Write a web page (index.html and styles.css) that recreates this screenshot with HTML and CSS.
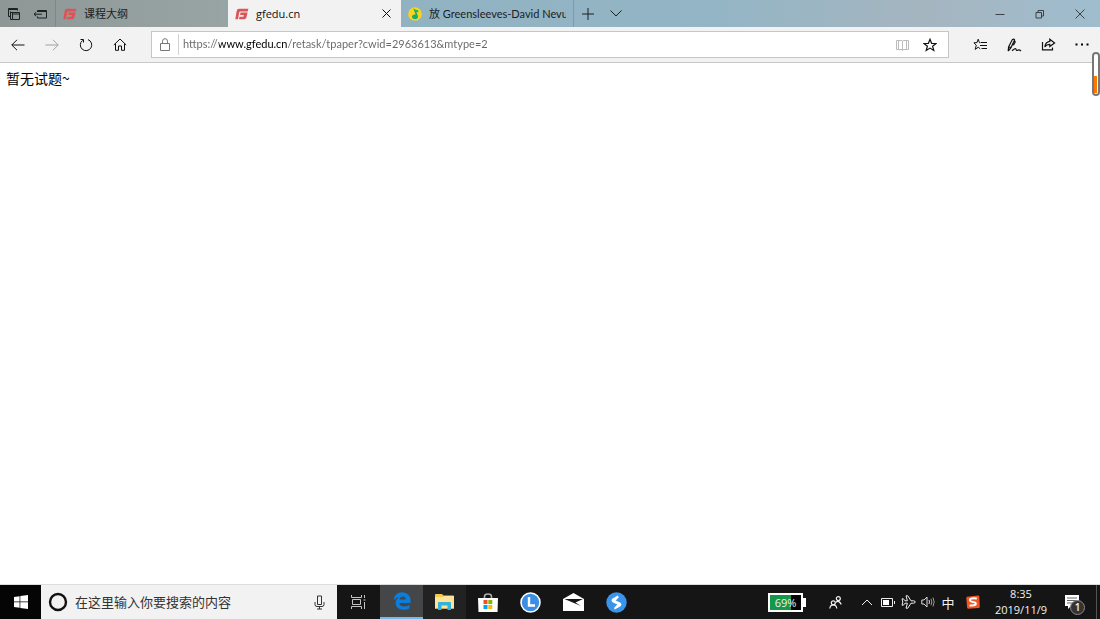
FILE: index.html
```
<!DOCTYPE html>
<html lang="zh-CN">
<head>
    <meta charset="UTF-8">
    <meta name="viewport" content="width=device-width, initial-scale=1.0">
    <title>gfedu.cn</title>
    <link rel="stylesheet" href="styles.css">
</head>
<body>
    <svg class="defs" aria-hidden="true">
        <symbol id="logo-g" viewBox="0 0 14 12">
            <path d="M4 .8H13.4L12.7 3.4H5.4Q4.5 3.4 4.3 4.3L3 11.2H.3L1.6 3.2Q2.1 .8 4 .8Z" fill="#dd5458"/>
            <path d="M5.6 4.6H12.6L11.4 9.4Q11 11.2 9.2 11.2H4L4.5 8.8H8.4L8.8 7H5Z" fill="#dd5458"/>
        </symbol>
    </svg>

    <!-- tabs -->
    <header class="tabbar">
        <div class="tab-tools">
            <button class="tool" aria-label="标签页">
                <svg class="icon" width="14" height="14" viewBox="0 0 14 14"><path d="M3.5 9.5H1.5V1.5H10.5V3.5M1.5 2.5H10M5.5 12.5H3.5V4.5M4 5.5H12.5V12.5H5.5V5.5M5.5 7H12.5"/></svg>
            </button>
            <button class="tool" aria-label="搁置标签页">
                <svg class="icon" width="15" height="12" viewBox="0 0 15 12"><path d="M4.5 4V2.5H13.5V10H4.5V8.5M4.5 3.5H13.5M1 6.2H9M3.2 4.2L1 6.2L3.2 8.2"/></svg>
            </button>
        </div>
        <a class="tab tab-first" href="#">
            <svg width="14" height="12"><use href="#logo-g"/></svg>
            <span class="tab-title">课程大纲</span>
        </a>
        <div class="tab active">
            <svg width="14" height="12"><use href="#logo-g"/></svg>
            <span class="tab-title">gfedu.cn</span>
            <button class="close" aria-label="关闭标签页">
                <svg class="icon" width="9" height="9" viewBox="0 0 9 9"><path d="M.5 .5L8.5 8.5M8.5 .5L.5 8.5"/></svg>
            </button>
        </div>
        <a class="tab tab-music" href="#">
            <svg width="14" height="14" viewBox="0 0 14 14"><circle cx="7" cy="7" r="6.8" fill="#f8d51c"/><path d="M5.2 1.2Q7.2 3 10.4 3.4L10.2 5.2L8.4 4.8L9.8 8.6Q10.8 11.8 7.4 12.2Q4 12.2 4 9.6Q4.4 7.2 7.6 7.6L6.2 3.8Z" fill="#16ac72"/></svg>
            <span class="tab-title">放 Greensleeves-David Nevu</span>
        </a>
        <button class="new-tab" aria-label="新建标签页">
            <svg class="icon" width="12" height="12" viewBox="0 0 12 12"><path d="M6 0V12M0 6H12"/></svg>
        </button>
        <button class="new-tab" aria-label="标签页预览">
            <svg class="icon" width="12" height="7" viewBox="0 0 12 7"><path d="M.5 .5L6 6L11.5 .5"/></svg>
        </button>
        <div class="window-buttons">
            <button aria-label="最小化"><svg class="icon" width="10" height="10" viewBox="0 0 10 10"><path d="M.5 5.5H9.5"/></svg></button>
            <button aria-label="还原"><svg class="icon" width="10" height="10" viewBox="0 0 10 10"><path d="M1 3.5H6.5V9H1ZM3 3.5V1.5H8.5V7H6.5"/></svg></button>
            <button aria-label="关闭"><svg class="icon" width="10" height="10" viewBox="0 0 10 10"><path d="M.5 .5L9.5 9.5M9.5 .5L.5 9.5"/></svg></button>
        </div>
    </header>

    <!-- address bar -->
    <nav class="toolbar">
        <button aria-label="后退"><svg class="icon" width="14" height="12" viewBox="0 0 14 12"><path d="M.8 6H13.5M6 .8L.8 6L6 11.2"/></svg></button>
        <button class="disabled" aria-label="前进" disabled><svg class="icon" width="14" height="12" viewBox="0 0 14 12"><path d="M.5 6H13.2M8 .8L13.2 6L8 11.2"/></svg></button>
        <button aria-label="刷新"><svg class="icon" width="14" height="14" viewBox="0 0 14 14"><path d="M9 1.6A5.7 5.7 0 1 1 3.6 2.4M1.5 1.5H4.5V4.5"/></svg></button>
        <button aria-label="主页"><svg class="icon" width="14" height="13" viewBox="0 0 14 13"><path d="M.8 7L7 1L13.2 7M2.5 5.6V12.3H5.5V8H8.5V12.3H11.5V5.6"/></svg></button>
        <div class="address">
            <svg class="icon lock" width="10" height="13" viewBox="0 0 10 13"><path d="M.5 5.5H9.5V12.5H.5ZM2.5 5.5V3.2A2.5 2.5 0 0 1 7.5 3.2V5.5"/></svg>
            <input class="url" type="text" aria-label="地址" value="https://www.gfedu.cn/retask/tpaper?cwid=2963613&amp;mtype=2" spellcheck="false">
            <button class="reading" aria-label="阅读视图"><svg class="icon" width="13" height="12" viewBox="0 0 13 12"><path d="M.5 1.5H5Q6.5 1.5 6.5 2.5Q6.5 1.5 8 1.5H12.5V10.5H8Q6.5 10.5 6.5 11.5Q6.5 10.5 5 10.5H.5ZM6.5 2.5V11M2.5 1.5V10.5M10.5 1.5V10.5"/></svg></button>
            <button aria-label="收藏"><svg class="icon" width="14" height="14" viewBox="0 0 14 14"><path d="M7 1.3L8.6 5.3L13 5.5L9.6 8.2L10.8 12.5L7 10.1L3.2 12.5L4.4 8.2L1 5.5L5.4 5.3Z" stroke-width="1.2"/></svg></button>
        </div>
        <button aria-label="收藏夹"><svg class="icon" width="14" height="13" viewBox="0 0 14 13"><path d="M7.5 4.7L6.4 4.6L5.2 1.2L4 4.6L.9 4.8L3.3 7.2L2.2 11.4L5.2 9.2L7.2 10.8M8 4.5H14M7 7.5H14M8.5 10.5H14"/></svg></button>
        <button aria-label="添加笔记"><svg class="icon" width="15" height="14" viewBox="0 0 15 14"><path d="M1.2 13L1.6 9L5.2 1.8Q7.4 .2 7.6 2L4 9.6L1.2 13M1.6 9L4 9.6M7.4 2.6L8.2 4L6.4 7.2M5 12.8Q8.6 9.6 9 11.2Q9.2 13.2 11.2 12Q12.5 11.6 14 13" stroke-width="1.2"/></svg></button>
        <button aria-label="共享"><svg class="icon" width="15" height="13" viewBox="0 0 15 13"><path d="M1.5 4V11.8H11.5V9.5M8.8 1.2L13.6 4.9L8.8 8.6V6.4Q5.8 6.2 3.8 9Q4.4 4 8.8 3.4Z" stroke-width="1.2"/></svg></button>
        <button aria-label="设置及其他"><svg width="14" height="3" viewBox="0 0 14 3"><path d="M.5 .5H2.5V2.5H.5ZM6 .5H8V2.5H6ZM11.5 .5H13.5V2.5H11.5Z"/></svg></button>
    </nav>

    <main class="page">
        <p>暂无试题~</p>
    </main>

    <!-- floating meter on the window edge -->
    <div class="meter"><div class="meter-fill"></div></div>

    <!-- taskbar -->
    <footer class="taskbar">
        <button class="start" aria-label="开始"><svg width="14" height="14" viewBox="0 0 14 14" fill="#fff"><path d="M0 2L5.6 1.2V6.6H0ZM6.3 1.1L14 0V6.6H6.3ZM0 7.3H5.6V12.7L0 12ZM6.3 7.3H14V14L6.3 12.9Z"/></svg></button>
        <div class="search">
            <svg width="20" height="20" viewBox="0 0 20 20"><circle cx="10" cy="10" r="8" fill="none" stroke="#111" stroke-width="2.4"/></svg>
            <input type="text" aria-label="搜索" placeholder="在这里输入你要搜索的内容">
            <button aria-label="语音"><svg class="icon" width="11" height="15" viewBox="0 0 11 15"><path d="M3.5 1H7.5V9.5H3.5ZM1 7V9.5Q1 11.5 3 11.5H8Q10 11.5 10 9.5V7M5.5 11.5V14M3 14H8"/></svg></button>
        </div>
        <button class="app" aria-label="任务视图"><svg width="15" height="14" viewBox="0 0 15 14" fill="none" stroke="#c4c4c4"><path d="M.5 0V2.5H10.5V0M.5 14V11.5H10.5V14M1.5 4.5H9.5V9.5H1.5ZM13.5 0V3M13.5 7V14M12.5 5H14.5"/></svg></button>
        <button class="app current" aria-label="Microsoft Edge"><svg width="18" height="18" viewBox="0 0 18 18"><path d="M.6 8.4Q1.4 .4 9.3 .3Q17.6 .6 17.6 9.6V11H6.3Q6.8 14.4 11 14.5Q14 14.5 16.5 13V16.5Q13.8 17.9 10.5 17.8Q3 17.5 2.6 11Q2.5 7.2 6.4 5Q3 5.4 .6 8.4ZM6.5 7.6H12.8Q12.6 4.5 9.8 4.4Q7 4.6 6.5 7.6Z" fill="#0b7ddd"/></svg></button>
        <button class="app opened" aria-label="文件资源管理器"><svg width="19" height="16" viewBox="0 0 19 16"><path d="M0 1Q0 0 1 0H7L8.5 1.5H18Q19 1.5 19 2.5V14.5H0Z" fill="#f7c94c"/><path d="M1 3L8 3L9 2H19V14.5H0V3Z" fill="#ffe498"/><path d="M3 9Q3 8 4 8H15Q16 8 16 9V16H12.5V11.5H6.5V16H3Z" fill="#32b2df"/></svg></button>
        <button class="app" aria-label="Microsoft Store"><svg width="20" height="19" viewBox="0 0 20 19"><path d="M6.5 5V3.5Q6.5 1 10 1Q13.5 1 13.5 3.5V5" fill="none" stroke="#aaa" stroke-width="1.6"/><path d="M0 5H20L19.5 19H.5Z" fill="#fff"/><path d="M5.5 7H9.5V11H5.5Z" fill="#f25022"/><path d="M10.3 7H14.3V11H10.3Z" fill="#7fba00"/><path d="M5.5 12H9.5V16H5.5Z" fill="#00a4ef"/><path d="M10.3 12H14.3V16H10.3Z" fill="#ffb900"/></svg></button>
        <button class="app" aria-label="时钟"><svg width="21" height="21" viewBox="0 0 21 21"><circle cx="10.5" cy="10.5" r="9.5" fill="#3b8ee4" stroke="#fff" stroke-width="1.6"/><path d="M9 5V13.5H15" fill="none" stroke="#fff" stroke-width="2.4"/></svg></button>
        <button class="app" aria-label="邮件"><svg width="21" height="18" viewBox="0 0 21 18"><path d="M0 6L10.5 0L21 6V18H0Z" fill="#fff"/><path d="M1.5 6H20L12.5 9.5L18 13Z" fill="#161515"/></svg></button>
        <button class="app" aria-label="浏览器"><svg width="21" height="21" viewBox="0 0 21 21"><circle cx="10.5" cy="10.5" r="10.2" fill="#3994ec"/><path d="M12.2 4.2L7.2 7.2Q5.6 8.6 7.4 9.8L12.8 12.2L8.6 16.6M8.4 16.8L13.6 13.8Q15.4 12.4 13.6 11.2L8.2 8.8L12.4 4.4" fill="none" stroke="#fff" stroke-width="1.8"/></svg></button>

        <div class="tray">
            <div class="battery"><div class="battery-body"><div class="battery-fill" style="width: 69%"></div><span>69%</span></div></div>
            <button class="people" aria-label="人脉"><svg width="13" height="13" viewBox="0 0 13 13" fill="none" stroke="#f2f2f2" stroke-width="1.2"><circle cx="9.3" cy="2.6" r="2"/><path d="M7 6.4Q9.3 3.4 12.3 8.4"/><circle cx="4.3" cy="6.8" r="2"/><path d="M.8 12.5Q1.2 8.8 4.3 8.8Q7.4 8.8 7.8 12.5" /></svg></button>
            <button class="tray-up" aria-label="显示隐藏的图标"><svg width="12" height="7" viewBox="0 0 12 7" fill="none" stroke="#eee"><path d="M1 6L6 1L11 6"/></svg></button>
            <button aria-label="电源"><svg width="14" height="9" viewBox="0 0 14 9" fill="none" stroke="#eee"><path d="M.5 .5H11.5V8.5H.5ZM13.5 3V6"/><path d="M2 2H8V7H2Z" fill="#fff" stroke="none"/></svg></button>
            <button aria-label="飞行模式"><svg width="15" height="14" viewBox="0 0 15 14" fill="none" stroke="#eee"><path d="M1 3.8H2.4L4 5.8H6.4L5 .8H6.8L10 5.8H12.5Q14.2 5.8 14.2 7Q14.2 8.2 12.5 8.2H10L6.8 13.2H5L6.4 8.2H4L2.4 10.2H1L1.8 7Z"/></svg></button>
            <button aria-label="音量"><svg width="14" height="12" viewBox="0 0 14 12" fill="none" stroke="#ddd"><path d="M.8 4H3L6 1V11L3 8H.8ZM8 4Q9 6 8 8"/><path d="M10 2.8Q11.7 6 10 9.2M12 1.5Q14.3 6 12 10.5" stroke="#999"/></svg></button>
            <button class="ime" aria-label="输入法">中</button>
            <button class="sogou" aria-label="搜狗输入法"><svg width="14" height="14" viewBox="0 0 14 14"><path d="M1.2 1.8L12 .4Q13.2 .3 13.3 1.5L13.8 11.8Q13.8 13 12.6 13.1L2.4 13.8Q1.2 13.8 1.1 12.6L.3 3Q.2 2 1.2 1.8Z" fill="#f05523"/><path d="M10.8 3.5Q4 2.8 3.9 5Q4 6.5 7 7Q10 7.4 9.8 9Q9.4 10.8 3.5 10.4" fill="none" stroke="#fff" stroke-width="2"/></svg></button>
            <button class="clock"><span>8:35</span><span>2019/11/9</span></button>
            <button class="notice" aria-label="通知">
                <svg width="14" height="14" viewBox="0 0 14 14"><path d="M0 0H14V11H6L3 14V11H0Z" fill="#fff"/><path d="M2 3H12M2 5.5H12M2 8H8" stroke="#666"/></svg>
                <span class="badge">1</span>
            </button>
            <button class="desktop" aria-label="显示桌面"></button>
        </div>
    </footer>
</body>
</html>
```
FILE: styles.css
```
*, *::before, *::after {
    margin: 0;
    padding: 0;
    box-sizing: border-box;
}

body {
    min-height: 100vh;
    display: flex;
    flex-direction: column;
    position: relative;
    background-color: #fff;
    color: #000;
    font-family: "Open Sans", "Noto Sans CJK SC", sans-serif;
    font-size: 11px;
}

button, input {
    border: none;
    background: none;
    color: inherit;
    font: inherit;
}

button {
    display: flex;
    align-items: center;
    justify-content: center;
    flex-shrink: 0;
}

svg {
    display: block;
    flex-shrink: 0;
}

.defs {
    position: absolute;
    width: 0;
    height: 0;
}

.icon {
    fill: none;
    stroke: currentColor;
}

/* tabs */
.tabbar {
    height: 27px;
    display: flex;
    background: linear-gradient(90deg, #8e9796 0, #98a4a4 20%, #91b2c1 37%, #94b5c5 65%, #a5b5c0 84%, #9fbdce 100%);
    color: #1c2124;
}

.tab-tools {
    width: 55px;
    display: flex;
}

.tool {
    width: 27px;
}

.tab {
    width: 173px;
    display: flex;
    align-items: center;
    gap: 7px;
    padding: 0 7px;
    color: inherit;
    line-height: 16px;
    text-decoration: none;
}

.tab-first {
    border-left: 1px solid #7f8989;
}

.tab.active {
    background-color: #f2f2f2;
    color: #111;
}

.tab-music {
    border-right: 1px solid #7c9cac;
    font-family: Lato, "Noto Sans CJK SC", sans-serif;
}

.tab-title {
    flex: 1;
    overflow: hidden;
    white-space: nowrap;
}

.close {
    width: 16px;
    height: 16px;
}

.new-tab {
    width: 28px;
}

.window-buttons {
    display: flex;
    margin-left: auto;
    color: #3a4247;
}

.window-buttons button {
    width: 40px;
}

/* address bar */
.toolbar {
    height: 36px;
    display: flex;
    align-items: center;
    padding: 0 1px;
    background-color: #f2f2f2;
    border-bottom: 1px solid #c8c8c8;
    color: #111;
}

.toolbar button {
    width: 34px;
    height: 27px;
}

.toolbar .disabled {
    color: #a0a0a0;
}

.address {
    flex: 1;
    height: 27px;
    margin: 0 14px;
    display: flex;
    align-items: center;
    background-color: #fff;
    border: 1px solid #c6c6c6;
}

.lock {
    margin: 0 8px;
    color: #777;
}

/* the host name is drawn darker than the rest of the address */
.url {
    flex: 1;
    min-width: 0;
    height: 21px;
    padding: 0 0 3px 4px;
    border-left: 1px solid #d0d0d0;
    background: linear-gradient(90deg, #666 40px, #000 40px, #000 109px, #666 109px) text;
    color: transparent;
    font-family: Lato, sans-serif;
}

.address button {
    width: 28px;
}

.address .reading {
    color: #bbb;
}

.address button:last-child {
    margin-right: 4px;
}

/* page */
.page {
    flex: 1;
    padding: 5px 6px;
    border-bottom: 1px solid #ddd;
    font-family: "Noto Sans CJK SC", sans-serif;
    font-size: 14px;
    line-height: 20px;
}

.meter {
    position: absolute;
    top: 52px;
    right: 0;
    width: 8px;
    height: 44px;
    padding: 0 1px 1px 0;
    display: flex;
    align-items: flex-end;
    border: 2px solid #777;
    border-radius: 4px;
    background-color: #fff;
}

.meter-fill {
    width: 100%;
    height: 17px;
    background-color: #ff7800;
}

/* taskbar */
.taskbar {
    height: 34px;
    display: flex;
    background-color: #161515;
    color: #f2f2f2;
}

.start {
    width: 41px;
    background-color: #050505;
}

.search {
    width: 296px;
    display: flex;
    align-items: center;
    gap: 7px;
    padding: 0 7px;
    background-color: #f2f2f2;
    color: #333;
}

.search input {
    flex: 1;
    min-width: 0;
    font-size: 13px;
}

.search input::placeholder {
    color: #333;
}

.search button {
    width: 22px;
}

.app {
    width: 43px;
}

.current {
    background-color: #454648;
    border-bottom: 2px solid #76b9ed;
}

.opened {
    background-color: #222;
}

.tray {
    display: flex;
    align-items: center;
    margin-left: auto;
}

.tray button {
    width: 20px;
    height: 34px;
}

.battery {
    display: flex;
    align-items: center;
    margin-right: 16px;
}

.battery::after {
    content: "";
    width: 3px;
    height: 9px;
    background-color: #fff;
}

.battery-body {
    width: 35px;
    height: 19px;
    display: grid;
    border: 2px solid #fff;
    background-color: #050505;
    line-height: 15px;
    text-align: center;
}

.battery-body > * {
    grid-area: 1 / 1;
}

.battery-fill {
    background-color: #15984a;
}

.tray .people {
    width: 26px;
}

.tray .tray-up {
    width: 23px;
    margin-left: 7px;
}

.tray .ime {
    font-size: 13px;
}

.tray .sogou {
    width: 30px;
}

.tray .clock {
    width: 66px;
    flex-direction: column;
    line-height: 16px;
}

.tray .notice {
    width: 42px;
    position: relative;
    padding-right: 6px;
}

.badge {
    position: absolute;
    left: 16px;
    top: 15px;
    width: 15px;
    height: 15px;
    border: 1px solid #888;
    border-radius: 50%;
    background-color: #333;
    font-size: 10px;
    font-weight: 600;
    line-height: 13px;
}

.tray .desktop {
    width: 4px;
    border-left: 1px solid #555;
}
```
